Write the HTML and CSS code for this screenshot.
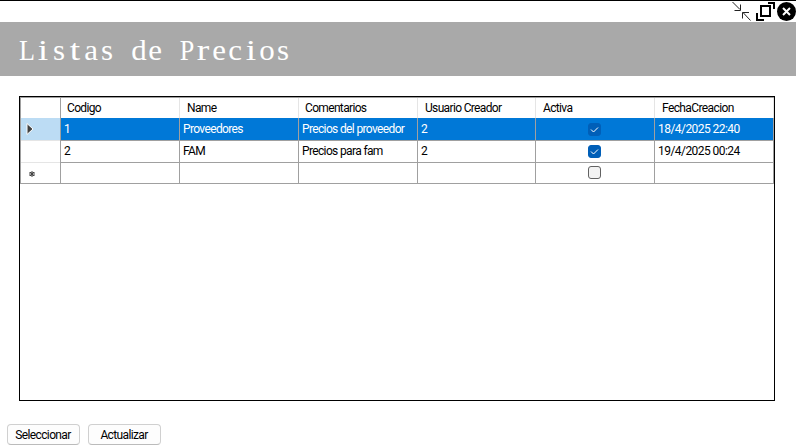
FILE: index.html
```html
<!DOCTYPE html>
<html lang="es">
<head>
<meta charset="utf-8">
<title>Listas de Precios</title>
<link rel="stylesheet" href="styles.css">
</head>
<body>
<div class="window">
  <div class="controls">
    <svg width="20" height="20" viewBox="0 0 20 20" fill="none" stroke="#222" stroke-width="1"><path d="M1.500 1L9 8.500M3.500 9.500H9.500V3.500M19.500 19.500L12 11.500M11.500 17.500V11.500H18"/></svg>
    <svg width="20" height="20" viewBox="0 0 20 20" fill="none" stroke="#000" stroke-width="2"><path d="M6 5H15V15H6ZM13 2H19V8M2 12V19H9"/></svg>
    <svg width="20" height="20" viewBox="0 0 20 20"><circle cx="10.500" cy="10.500" r="9.500"/><path d="M7 7L14 14M14 7L7 14" stroke="#fff" stroke-width="2"/></svg>
  </div>
  <h1 class="title"><span class="cap">L</span><span class="wide">i</span><span>s</span><span class="wide">t</span><span>a</span><span>s</span><span> </span><span>d</span><span>e</span><span> </span><span class="cap">P</span><span class="wide">r</span><span>e</span><span>c</span><span class="wide">i</span><span>o</span><span>s</span></h1>
  <div class="grid">
    <div class="row head"><div></div><div>Codigo</div><div class="near">Name</div><div>Comentarios</div><div class="near">Usuario Creador</div><div class="near">Activa</div><div class="near">FechaCreacion</div></div>
    <div class="row selected"><div class="mark"><svg width="8" height="12" viewBox="0 0 8 12"><path d="M1 .5V11.500L7 6Z" fill="#404040" stroke="#fff" stroke-width="1"/></svg></div><div>1</div><div>Proveedores</div><div>Precios del proveedor</div><div>2</div><div class="check"><span class="box on"><svg width="11" height="11" viewBox="0 0 11 11"><path d="M2 5.500L4.500 8L9 3.500"/></svg></span></div><div class="date">18/4/2025 22:40</div></div>
    <div class="row"><div></div><div>2</div><div>FAM</div><div>Precios para fam</div><div>2</div><div class="check"><span class="box on"><svg width="11" height="11" viewBox="0 0 11 11"><path d="M2 5.500L4.500 8L9 3.500"/></svg></span></div><div class="date">19/4/2025 00:24</div></div>
    <div class="row"><div class="mark star"><svg width="6" height="6" viewBox="0 0 6 6"><path d="M3 0V6M0 2H6M0 4H6M1 1L5 5M5 1L1 5" stroke="#444" stroke-width="1"/></svg></div><div></div><div></div><div></div><div></div><div class="check"><span class="box"></span></div><div></div></div>
  </div>
  <div class="actions"><button>Seleccionar</button><button>Actualizar</button></div>
</div>
</body>
</html>
```
FILE: styles.css
```css
* { box-sizing: border-box; }
body { margin: 0; background: #fff; color: #000; font: 12px/20px Roboto, "Liberation Sans", sans-serif; letter-spacing: -0.64px; }
.window { height: 446px; border-top: 1px solid #000; overflow: hidden; }
.controls { height: 21px; display: flex; justify-content: flex-end; gap: 4px; }
.controls svg:last-child { margin-left: -3px; }
.title { height: 54px; margin: 0; padding-left: 19px; display: flex; background: #a9a9a9; color: #fff; font: 400 30px/56px "Liberation Serif", serif; letter-spacing: 0; }
.title span { width: 16px; display: flex; justify-content: center; white-space: pre; transform: scaleX(1.03); }
.title .cap { transform: scaleX(.87); }
.title .wide { transform: scaleX(1.25); }
.grid { width: 756px; height: 305px; margin: 20px 0 0 19px; border: 1px solid #000; }
.row { width: 754px; height: 22px; display: grid; grid-template-columns: 40px 119px 119px 119px 118px 119px 119px; border-left: 1px solid #a0a0a0; }
.row > div { border-right: 1px solid #a0a0a0; border-bottom: 1px solid #a0a0a0; padding-left: 3px; line-height: 22px; white-space: nowrap; }
.row > div:first-child { border-bottom-color: #e5e5e5; }
.row:last-child > div:first-child { border-bottom-color: #a0a0a0; }
.head { height: 21px; border-top: 1px solid #a0a0a0; }
.row.head > div { padding-left: 6px; line-height: 20px; border-right-color: #e5e5e5; letter-spacing: -0.66px; }
.row.head > .near { padding-left: 7px; }
.row.head > div:first-child { border-right-color: #a0a0a0; }
.row.head > div:last-child { letter-spacing: -0.6px; }
.selected > div { background: #0078d7; color: #fff; }
.selected > div:first-child { background: #bcdcf4; }
.row > .mark { display: flex; align-items: center; padding-left: 5px; }
.row > .star { padding: 2px 0 0 8px; }
.row > .check { display: flex; align-items: center; justify-content: center; padding: 0 1px 0 0; }
.row > .date { letter-spacing: -0.55px; }
.box { width: 13px; height: 13px; border: 1px solid #626262; border-radius: 3px; background: #f3f3f3; display: flex; }
.box.on { background: #005fb8; border-color: #005fb8; }
.box path { fill: none; stroke: #fff; stroke-width: 1; }
.actions { display: flex; gap: 8px; margin: 23px 0 0 7px; }
button { width: 73px; height: 21px; padding: 0 1px 0 0; border: 1px solid #d0d0d0; border-bottom-color: #bbb; border-radius: 4px; background: #fdfdfd; color: #000; font: inherit; letter-spacing: inherit; line-height: 21px; }
```
